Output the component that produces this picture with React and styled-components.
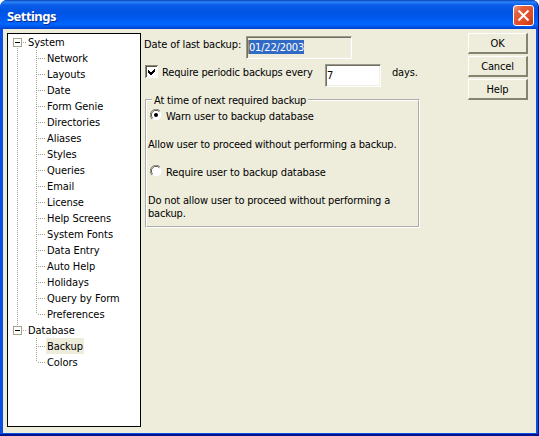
import React from "react";
import styled, { createGlobalStyle } from "styled-components";

const Global = createGlobalStyle`
  * { box-sizing: border-box; }
  body { margin: 0; overflow: hidden; background: #fff; }
`;

const Window = styled.div`
  width: 539px;
  height: 436px;
  display: flex;
  flex-direction: column;
  overflow: hidden;
  border-radius: 7px 7px 0 0;
  background: #0a4fe0;
  border-right: 1px solid #00138c;
  border-bottom: 2px solid #00138c;
  font: 11px/16px "DejaVu Sans Condensed", "DejaVu Sans", sans-serif;
  font-stretch: condensed;
  color: #000;
`;

const TitleBar = styled.header`
  flex: 0 0 29px;
  display: flex;
  align-items: center;
  justify-content: space-between;
  padding: 2px 4px 0 7px;
  background: linear-gradient(#0842b8 0, #2b83f8 2px, #0a5ce8 5px, #0054e3 12px, #0058ee 18px, #0066ff 24px, #005bf0 26px, #003fc8 29px);
`;

const Title = styled.h1`
  margin: 0;
  padding-top: 1px;
  font: 700 13px/18px "Noto Sans", "Open Sans", sans-serif;
  letter-spacing: -0.55px;
  color: #fff;
  text-shadow: 1px 1px 0 #0a2a90;
`;

const CloseButton = styled.button`
  width: 21px;
  height: 21px;
  padding: 0;
  display: grid;
  place-items: center;
  border: 1px solid #fff;
  border-radius: 3px;
  background: linear-gradient(135deg, #f0a080 0, #e4603c 25%, #e04a20 70%, #bc3410 100%);
`;

const Client = styled.main`
  flex: 1;
  min-height: 0;
  display: flex;
  align-items: flex-start;
  margin: 0 2px 1px 3px;
  padding: 4px 8px 0 4px;
  background: #eeeddc;
`;

const Tree = styled.nav`
  flex: 0 0 134px;
  height: 394px;
  border: 1px solid #000;
  background: #fff;
  padding-left: 5px;
`;

const dotsX = "repeating-linear-gradient(90deg, #a5a38f 0 1px, transparent 1px 2px)";
const dotsY = "repeating-linear-gradient(#a5a38f 0 1px, transparent 1px 2px)";

const Branch = styled.section`
  background: ${(p) => (p.$continues ? dotsY : "none")} 4px 8px / 1px 100% no-repeat;
`;

const BranchHead = styled.div`
  height: 16px;
  display: flex;
  align-items: center;
  background: ${dotsX} 10px 8px / 4px 1px no-repeat,
    ${(p) => (p.$joined ? dotsY : "none")} 4px 0 / 1px 4px no-repeat;
`;

const Toggle = styled.svg`
  width: 9px;
  height: 9px;
  margin-right: 6px;
`;

const Leaf = styled.div`
  height: 16px;
  display: flex;
  margin-left: 23px;
  padding-left: 10px;
  background: ${dotsY} 0 0 / 1px ${(p) => (p.$last ? 8 : 16)}px no-repeat,
    ${dotsX} 2px 8px / 8px 1px no-repeat;
`;

const Label = styled.span`
  height: 16px;
  padding: 1px ${(p) => (p.$plain ? 0 : 1)}px 0;
  white-space: nowrap;
  letter-spacing: -0.06px;
  background: ${(p) => (p.$selected ? "#eeeddc" : "transparent")};
`;

const Form = styled.form`
  flex: 0 0 279px;
  padding: 3px 0 0 3px;
`;

const FieldRow = styled.div`
  height: 28px;
  display: flex;
  align-items: flex-start;
`;

const Field = styled.div`
  flex: none;
  width: ${(p) => p.$width}px;
  height: 23px;
  padding: ${(p) => (p.$readOnly ? "2px 0 0 0" : "3px 0 0 1px")};
  border: solid;
  border-width: 1px;
  border-color: #9b9a89 #fff #fff #9b9a89;
  box-shadow: inset 1px 1px 0 #716f64, inset -1px -1px 0 #f1efe2;
  background: ${(p) => (p.$readOnly ? "#eeeddc" : "#fff")};
  line-height: 16px;
`;

const SelectedText = styled.span`
  display: block;
  width: 56px;
  height: 14px;
  margin: 1px 0 0 1px;
  line-height: 15px;
  color: #fff;
  background: #316ac5;
  border-left: 1px solid #d08a30;
  letter-spacing: -0.2px;
`;

const Mark = styled.svg`
  flex: none;
  width: ${(p) => p.$size}px;
  height: ${(p) => p.$size}px;
  margin: ${(p) => p.$top}px 4px 0 0;
`;

const CheckRow = styled.div`
  display: flex;
  padding: 0 0 0 1px;
  height: 28px;
`;

const Text = styled.span`
  display: block;
  flex: none;
  width: ${(p) => (p.$width ? `${p.$width}px` : "auto")};
  white-space: pre;
  letter-spacing: ${(p) => p.$spacing ?? -0.17}px;
  margin-left: ${(p) => p.$left || 0}px;

  ${FieldRow} > &,
  ${CheckRow} > & {
    padding-top: 1px;
  }
`;

const Group = styled.fieldset`
  width: 275px;
  height: 136px;
  margin: 0 0 0 1px;
  padding: 2px 0 0 1px;
  min-width: 0;
  border: 2px groove #fff;
  line-height: 13px;
`;

const Legend = styled.legend`
  height: 16px;
  margin-left: 4px;
  padding: 1px 2px 0;
  line-height: 16px;
  white-space: nowrap;
  letter-spacing: -0.16px;
`;

const Radio = styled.div`
  display: flex;
  height: 28px;
  padding-left: 2px;
`;

const Note = styled.div`
  height: 28px;
`;

const Actions = styled.aside`
  display: flex;
  flex-direction: column;
  gap: 2px;
  margin-left: auto;
`;

const PushButton = styled.button`
  width: 60px;
  height: 21px;
  padding: 1px 0 0;
  border: solid;
  border-width: 1px 2px 2px 1px;
  border-color: #fff #85836f #85836f #fff;
  background: #eeeddc;
  color: #000;
  font: inherit;
  line-height: 16px;
  letter-spacing: -0.15px;
`;

const system = ["Network", "Layouts", "Date", "Form Genie", "Directories", "Aliases", "Styles", "Queries", "Email", "License", "Help Screens", "System Fonts", "Data Entry", "Auto Help", "Holidays", "Query by Form", "Preferences"];
const database = ["Backup", "Colors"];

function TreeBranch({ name, items, continues, joined, selected }) {
  return (
    <Branch $continues={continues}>
      <BranchHead $joined={joined}>
        <Toggle viewBox="0 0 9 9" shapeRendering="crispEdges">
          <rect x=".5" y=".5" width="8" height="8" fill="#fff" stroke="#a5a38f" />
          <path d="M2 4.5h5" stroke="#000" />
        </Toggle>
        <Label $plain>{name}</Label>
      </BranchHead>
      {items.map((item, i) => (
        <Leaf key={item} $last={i === items.length - 1}>
          <Label $selected={item === selected}>{item}</Label>
        </Leaf>
      ))}
    </Branch>
  );
}

function RadioMark({ checked }) {
  return (
    <Mark $size={12} $top={-1} viewBox="0 0 12 12">
      <circle cx="6" cy="6" r="5.3" fill="#fff" />
      <path d="M1.9 10.1A5.4 5.4 0 0 1 10.1 1.9" fill="none" stroke="#8b8978" />
      <path d="M2.7 9.3A4.5 4.5 0 0 1 9.3 2.7" fill="none" stroke="#55534a" />
      {checked && <circle cx="6" cy="6" r="2" fill="#000" />}
    </Mark>
  );
}

export default function App() {
  return (
    <>
      <Global />
      <Window>
        <TitleBar>
          <Title>Settings</Title>
          <CloseButton type="button" aria-label="Close">
            <svg width="13" height="13" viewBox="0 0 13 13">
              <path d="M1.5 1.5l10 10M11.5 1.5l-10 10" stroke="#fff" strokeWidth="2" />
            </svg>
          </CloseButton>
        </TitleBar>
        <Client>
          <Tree>
            <TreeBranch name="System" items={system} continues />
            <TreeBranch name="Database" items={database} joined selected="Backup" />
          </Tree>
          <Form>
            <FieldRow>
              <Text $width={102} $spacing={-0.12}>Date of last backup:</Text>
              <Field $width={106} $readOnly>
                <SelectedText>01/22/2003</SelectedText>
              </Field>
            </FieldRow>
            <CheckRow>
              <Mark $size={13} $top={1} viewBox="0 0 13 13" shapeRendering="crispEdges">
                <path d="M0 0h13v13H0z" fill="#fff" />
                <path d="M0 13V0h13v1H1v12z" fill="#8b8978" />
                <path d="M1 12V1h11v1H2v10z" fill="#55534a" />
                <path d="M3 5v3l2 2h1l4-4V3L5.5 7.5z" fill="#000" />
              </Mark>
              <Text $width={163}>Require periodic backups every</Text>
              <Field $width={56}>7</Field>
              <Text $left={11}>days.</Text>
            </CheckRow>
            <Group>
              <Legend>At time of next required backup</Legend>
              <Radio>
                <RadioMark checked />
                <Text $spacing={-0.12}>Warn user to backup database</Text>
              </Radio>
              <Note>
                <Text>Allow user to proceed without performing a backup.</Text>
              </Note>
              <Radio>
                <RadioMark />
                <Text $spacing={-0.12}>Require user to backup database</Text>
              </Radio>
              <Note>
                <Text>{"Do not allow user to proceed without performing a\nbackup."}</Text>
              </Note>
            </Group>
          </Form>
          <Actions>
            <PushButton type="button">OK</PushButton>
            <PushButton type="button">Cancel</PushButton>
            <PushButton type="button">Help</PushButton>
          </Actions>
        </Client>
      </Window>
    </>
  );
}
